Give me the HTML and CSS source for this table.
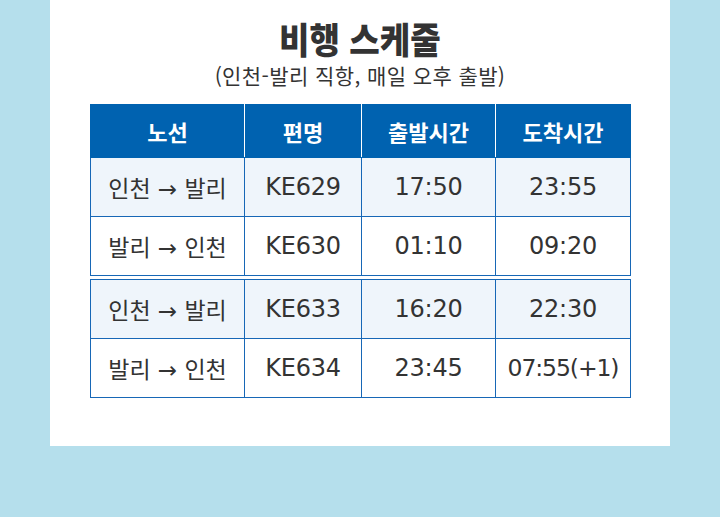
FILE: index.html
```html
<!DOCTYPE html>
<html lang="ko">
<head>
<meta charset="utf-8">
<title>비행 스케줄</title>
<link rel="stylesheet" href="styles.css">
</head>
<body>
<div class="panel">
  <h1 class="title"><span class="title-text">비행 스케줄</span></h1>
  <p class="subtitle">(인천-발리 직항, 매일 오후 출발)</p>
  <table class="sched">
    <colgroup><col class="c1"><col class="c2"><col class="c3"><col class="c4"></colgroup>
    <thead>
      <tr><th>노선</th><th>편명</th><th>출발시간</th><th>도착시간</th></tr>
    </thead>
    <tbody>
      <tr class="alt"><td class="route">인천 → 발리</td><td>KE629</td><td>17:50</td><td>23:55</td></tr>
      <tr><td class="route">발리 → 인천</td><td>KE630</td><td>01:10</td><td>09:20</td></tr>
    </tbody>
  </table>
  <table class="sched second">
    <colgroup><col class="c1"><col class="c2"><col class="c3"><col class="c4"></colgroup>
    <tbody>
      <tr class="alt"><td class="route">인천 → 발리</td><td>KE633</td><td>16:20</td><td>22:30</td></tr>
      <tr><td class="route">발리 → 인천</td><td>KE634</td><td>23:45</td><td class="tight">07:55(+1)</td></tr>
    </tbody>
  </table>
</div>
</body>
</html>
```
FILE: styles.css
```css
html, body {
  margin: 0;
  padding: 0;
  background: #b5dfec;
}
body {
  font-family: "Noto Sans CJK KR", "Noto Sans", sans-serif;
  color: #333;
  height: 517px;
}
.panel {
  background: #fff;
  margin: 0 50px;
  height: 446px;
  padding-top: 16px;
  box-sizing: border-box;
  overflow: hidden;
}
.title {
  margin: 0;
  text-align: center;
  font-size: 36px;
  line-height: 44px;
  font-weight: 900;
  color: #333;
}
.title-text {
  display: inline-block;
  transform: scaleX(0.92);
  letter-spacing: 0;
}
.subtitle {
  margin: 0;
  text-align: center;
  font-size: 21px;
  line-height: 30px;
  color: #333;
  letter-spacing: 0.4px;
}
.sched {
  border-collapse: collapse;
  table-layout: fixed;
  width: 540px;
  margin: 14px 0 0 40px;
  font-family: "DejaVu Sans", "Noto Sans CJK KR", sans-serif;
}
.sched.second {
  margin-top: 3px;
}
.c1 { width: 154px; }
.c2 { width: 117px; }
.c3 { width: 134px; }
.c4 { width: 135px; }
.sched th {
  background: #0062b0;
  color: #fff;
  font-family: "Noto Sans CJK KR", sans-serif;
  font-weight: 700;
  font-size: 22px;
  height: 52px;
  padding: 0;
  border: 1px solid #0062b0;
  border-left-color: #fff;
  border-right-color: #fff;
}
.sched th:first-child { border-left-color: #0062b0; }
.sched th:last-child { border-right-color: #0062b0; }
.sched td {
  border: 1px solid #1767b6;
  height: 58px;
  padding: 0;
  text-align: center;
  font-size: 24px;
  color: #333;
  letter-spacing: -0.2px;
}
.sched td.tight {
  font-size: 23.5px;
  letter-spacing: -1.1px;
}
.sched td.route {
  font-size: 23px;
  letter-spacing: 0;
}
.sched tr.alt td {
  background: #eff5fb;
}
```
